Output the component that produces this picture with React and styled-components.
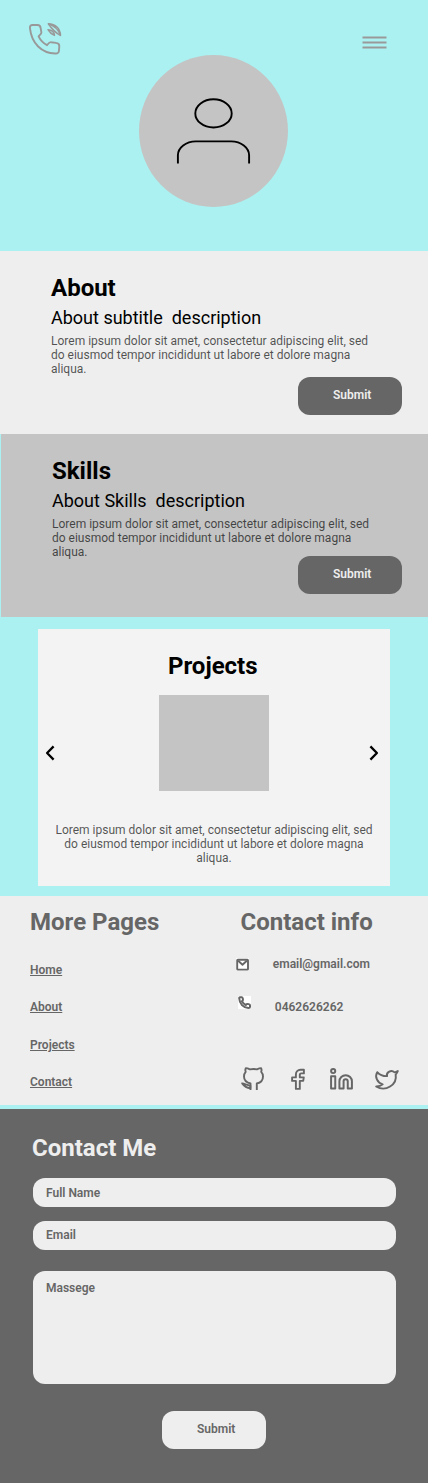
import React from "react";
import styled, { createGlobalStyle } from "styled-components";

const color = {
  aqua: "#acf1f1",
  silver: "#c4c4c4",
  light: "#eeeeee",
  dark: "#666666",
  icon: "#999999",
};

const GlobalStyle = createGlobalStyle`
  *, *::before, *::after { box-sizing: border-box; }
  body {
    margin: 0;
    background: ${color.aqua};
    font-family: Roboto, "Liberation Sans", sans-serif;
  }
  h2, h3, p { margin: 0; }
  svg { display: block; flex: none; }
`;

const Page = styled.div`
  width: 428px;
  min-height: 1483px;
  display: flex;
  flex-direction: column;
  background: ${color.aqua};
`;

const Header = styled.header`
  height: 251px;
  display: grid;
  grid-template-columns: 113px 223px auto;
  align-items: start;
  padding: 20px 39px 0 26px;
`;

const Avatar = styled.div`
  width: 149px;
  height: 152px;
  margin-top: 35px;
  border-radius: 50%;
  background: ${color.silver};
`;

const IconButton = styled.button`
  width: ${(p) => p.$width}px;
  margin: ${(p) => p.$top || 0}px 0 0;
  padding: 0;
  border: 0;
  background: none;
  color: ${(p) => p.$color || color.icon};
`;

const Title = styled.h2`
  font-size: 24px;
  line-height: 28px;
  font-weight: 700;
  color: ${(p) => p.$color || "#000"};
`;

const Subtitle = styled.h3`
  margin-top: 5px;
  font-size: 18px;
  line-height: 21px;
  font-weight: 400;
  white-space: pre;
`;

const Copy = styled.p`
  width: 326px;
  font-size: 12px;
  line-height: 14px;
  color: rgba(0, 0, 0, 0.67);
  text-align: ${(p) => p.$align || "left"};
`;

const Intro = styled.section`
  height: 183px;
  display: flex;
  flex-direction: column;
  margin-left: ${(p) => p.$inset || 0}px;
  padding: 23px 26px 0 51px;
  background: ${(p) => p.$background};

  ${Copy} { margin-top: 6px; }
`;

const Submit = styled.button`
  width: 104px;
  height: 38px;
  flex: none;
  display: flex;
  align-items: flex-start;
  align-self: ${(p) => p.$align || "flex-end"};
  margin: ${(p) => p.$gap}px 0 0 ${(p) => p.$left || 0}px;
  padding: 11px 0 0 35px;
  border: 0;
  border-radius: 12px;
  background: ${(p) => (p.$inverse ? color.light : color.dark)};
  color: ${(p) => (p.$inverse ? color.dark : color.light)};
  font: 600 12px/14px Roboto, "Liberation Sans", sans-serif;
`;

const ProjectCard = styled.section`
  height: 257px;
  margin: 12px 38px 10px;
  padding-top: 23px;
  display: flex;
  flex-direction: column;
  align-items: center;
  background: #f3f3f3;

  ${Title} { margin-right: 2.5px; }
`;

const Carousel = styled.div`
  width: 100%;
  height: 96px;
  display: flex;
  justify-content: space-between;
  margin: 15px 0 32px;
  padding: 0 11px 0 7px;
`;

const ProjectImage = styled.div`
  width: 110px;
  margin-left: 4px;
  background: ${color.silver};
`;

const Footer = styled.footer`
  height: 209px;
  display: grid;
  grid-template-columns: 206px 1fr;
  padding: 12px 28px 0 30px;
  background: ${color.light};
`;

const Nav = styled.nav`
  display: flex;
  flex-direction: column;
  align-items: flex-start;
  gap: 23.4px;
  margin-top: 27px;
`;

const NavLink = styled.a`
  font-size: 12px;
  line-height: 14px;
  font-weight: 600;
  color: ${color.dark};
  text-decoration: underline;
`;

const ContactColumn = styled.div`
  display: flex;
  flex-direction: column;

  ${Title} { margin-left: 4.5px; }
`;

const ContactRow = styled.div`
  display: flex;
  align-items: flex-start;
  gap: ${(p) => p.$gap}px;
  margin-top: ${(p) => p.$top}px;
  padding-left: ${(p) => p.$indent || 0}px;
  font-size: 12px;
  line-height: 14px;
  font-weight: 600;
  color: ${color.dark};
`;

const IconTile = styled.span`
  width: 13px;
  height: 13px;
  margin-top: ${(p) => p.$drop || 0}px;
  background: #fff;
`;

const ContactText = styled.span`
  margin-top: ${(p) => p.$drop || 0}px;
`;

const Socials = styled.div`
  display: grid;
  grid-template-columns: 49.5px 39px 44.5px auto;
  margin: 53px 0 0 4.5px;
  color: ${color.dark};
`;

const ContactForm = styled.form`
  height: 374px;
  display: flex;
  flex-direction: column;
  margin-top: 4px;
  padding: 25px 32px 0 33px;
  background: ${color.dark};

  ${Title} { margin-left: -1px; }
`;

const Field = styled.label`
  height: ${(p) => p.$height || 29}px;
  flex: none;
  margin-top: ${(p) => p.$gap}px;
  padding: ${(p) => p.$pad}px 13px 0;
  border-radius: 12px;
  background: ${color.light};
  color: ${color.dark};
  font-size: 12px;
  line-height: 14px;
  font-weight: 600;
`;

const lorem =
  "Lorem ipsum dolor sit amet, consectetur adipiscing elit, sed do eiusmod tempor incididunt ut labore et dolore magna aliqua.";

const Stroke = ({ width, height, box, weight = 2, children }) => (
  <svg
    width={width}
    height={height}
    viewBox={box || `0 0 ${width} ${height}`}
    fill="none"
    stroke="currentColor"
    strokeWidth={weight}
    strokeLinejoin="round"
    preserveAspectRatio="none"
  >
    {children}
  </svg>
);

const CallIcon = () => (
  <Stroke width={38} height={38} weight={1.9}>
    <path d="M6.5 5H11.5C13.6 5 14.4 6 14.6 7.8L15.4 12.3C15.6 14 13.5 15.1 12.6 16.4C14.4 20.2 17.4 23.2 21 25.2C22.3 23.6 23.3 21.8 25.2 22.2L30 22.9C32.5 23.1 33.4 24 33.3 26.2L33 30.2C32.9 32.6 31.6 33.8 29.2 33.5C15.7 33 5.6 23.6 4 8.4C3.6 6.2 4.6 5 6.5 5Z" />
    <path strokeWidth="1.5" d="M22.3 3.7C29.6 3.9 34.2 8.5 34.5 15.4C32.4 9.5 28.2 5.4 22.3 3.7Z" />
    <path strokeWidth="1.5" d="M22.3 3.7C25 7.6 29.2 12.8 34.5 15.4" />
    <path strokeWidth="1.5" d="M22 9.7C25.8 9.9 28.3 11.9 28.5 15.4C26.4 14.5 23.4 12.3 22 9.7Z" />
  </Stroke>
);

const MenuIcon = () => (
  <Stroke width={25} height={13}>
    <path d="M0.5 1.5H24.5M0.5 6.5H24.5M0.5 11.5H24.5" />
  </Stroke>
);

const PersonIcon = () => (
  <Stroke width={149} height={152} weight={1.9}>
    <ellipse cx="74.5" cy="58.4" rx="18.2" ry="14.1" />
    <path d="M38.9 108.5V100.3C38.9 92.7 47 86.4 56.8 86.4H92.2C102 86.4 110.1 92.7 110.1 100.3V108.5" />
  </Stroke>
);

const ArrowIcon = ({ back }) => (
  <Stroke width={10} height={16} weight={2.3}>
    <path d={back ? "M8.6 1.4L2.1 8L8.6 14.6" : "M1.4 1.4L7.9 8L1.4 14.6"} />
  </Stroke>
);

const MailIcon = () => (
  <Stroke width={13} height={13} weight={1.9}>
    <rect x="1.2" y="1.8" width="10.8" height="9.8" rx="0.6" />
    <path d="M2.2 2.8L6.5 6.8L10.8 2.8" />
  </Stroke>
);

const PhoneIcon = () => (
  <Stroke width={13} height={13} weight={2}>
    <path d="M2 1.2H3.7C4.8 1.2 5.2 3.5 4.8 4.5L3.9 5.3C4.9 7.1 6 8.2 7.8 9L8.6 8.1C9.6 7.6 12 8.2 12 9.3V11C12 11.8 11.2 12 10.4 12C5.2 11.7 1.5 7.7 1.2 2.3C1.2 1.6 1.4 1.2 2 1.2Z" />
  </Stroke>
);

const GithubIcon = () => (
  <Stroke width={25} height={25} weight={1.9}>
    <path d="M9.5 23V16.5C5.8 15.5 3 13.2 3 9.4C3 7.5 3.6 6 4.7 4.8C4.2 3.6 4.3 2.2 4.8 1.1C6.4 1.1 7.6 1.7 8.9 2.4C11.2 1.9 13.8 1.9 16 2.4C17.3 1.7 18.6 1.1 20.1 1.1C20.6 2.2 20.7 3.6 20.2 4.8C21.4 6 22 7.5 22 9.4C22 13.2 19.4 15.7 15.8 16.5V23" />
    <path d="M1.2 16.4C3.6 16.7 5.9 18.2 9.3 18.6V21.2C5.8 21 3.5 19.7 1.2 16.4Z" />
  </Stroke>
);

const FacebookIcon = () => (
  <Stroke width={17} height={25} weight={1.9}>
    <path d="M13.9 2.8H10.6C7.7 2.8 5.9 4.9 5.9 7.5V10.4H2.1V13.9H5.9V21.9H9.8V13.9H13.2L13.8 10.4H9.8V8C9.8 6.9 10.4 6.4 11.3 6.4H13.9Z" />
  </Stroke>
);

const LinkedinIcon = () => (
  <Stroke width={25} height={24.5} box="0 0 24 24" weight={1.9}>
    <path d="M16 8a6 6 0 0 1 6 6v7h-4v-7a2 2 0 0 0-4 0v7h-4v-7a6 6 0 0 1 6-6z" />
    <rect x="2" y="9" width="4" height="12" />
    <circle cx="4" cy="4" r="2" />
  </Stroke>
);

const TwitterIcon = () => (
  <Stroke width={26} height={24.5} box="0 0 24 24" weight={1.8}>
    <path d="M22 4s-.7 2.1-2 3.4c1.6 10-9.4 17.3-18 11.6 2.2.1 4.4-.6 6-2C3 15.5.5 9.6 3 5c2.2 2.6 5.6 4.1 9 4-.9-4.2 4-6.6 7-3.8 1.1 0 3-1.2 3-1.2z" />
  </Stroke>
);

export default function App() {
  return (
    <Page>
      <GlobalStyle />
      <Header>
        <IconButton $width={38} aria-label="Call"><CallIcon /></IconButton>
        <Avatar><PersonIcon /></Avatar>
        <IconButton $width={25} $top={16} aria-label="Menu"><MenuIcon /></IconButton>
      </Header>

      <Intro $background={color.light}>
        <Title>About</Title>
        <Subtitle>{"About subtitle  description"}</Subtitle>
        <Copy>{lorem}</Copy>
        <Submit $gap={1}>Submit</Submit>
      </Intro>

      <Intro $background={color.silver} $inset={1}>
        <Title>Skills</Title>
        <Subtitle>{"About Skills  description"}</Subtitle>
        <Copy>{lorem}</Copy>
        <Submit $gap={-3}>Submit</Submit>
      </Intro>

      <ProjectCard>
        <Title>Projects</Title>
        <Carousel>
          <IconButton $width={10} $top={20} $color="#000" aria-label="Previous"><ArrowIcon back /></IconButton>
          <ProjectImage />
          <IconButton $width={10} $top={20} $color="#000" aria-label="Next"><ArrowIcon /></IconButton>
        </Carousel>
        <Copy $align="center">{lorem}</Copy>
      </ProjectCard>

      <Footer>
        <div>
          <Title $color={color.dark}>More Pages</Title>
          <Nav>
            <NavLink>Home</NavLink>
            <NavLink>About</NavLink>
            <NavLink>Projects</NavLink>
            <NavLink>Contact</NavLink>
          </Nav>
        </div>
        <ContactColumn>
          <Title $color={color.dark}>Contact info</Title>
          <ContactRow $gap={23.8} $top={21}>
            <IconTile $drop={1}><MailIcon /></IconTile>
            <ContactText>email@gmail.com</ContactText>
          </ContactRow>
          <ContactRow $gap={23.8} $top={25} $indent={2}>
            <IconTile><PhoneIcon /></IconTile>
            <ContactText $drop={4}>0462626262</ContactText>
          </ContactRow>
          <Socials>
            <GithubIcon />
            <FacebookIcon />
            <LinkedinIcon />
            <TwitterIcon />
          </Socials>
        </ContactColumn>
      </Footer>

      <ContactForm>
        <Title $color={color.light}>Contact Me</Title>
        <Field $gap={16} $pad={8}>Full Name</Field>
        <Field $gap={14} $pad={7}>Email</Field>
        <Field $gap={21} $pad={10} $height={113}>Massege</Field>
        <Submit type="button" $inverse $align="flex-start" $gap={27} $left={129}>Submit</Submit>
      </ContactForm>
    </Page>
  );
}
